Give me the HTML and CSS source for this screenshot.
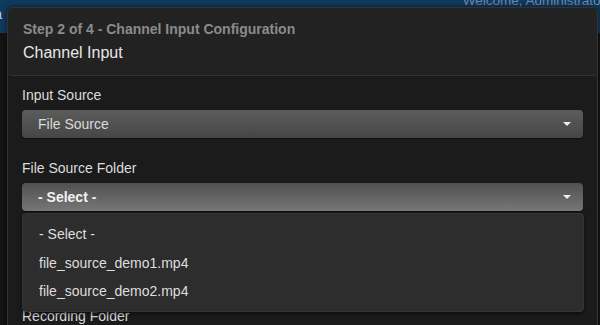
FILE: index.html
```html
<!DOCTYPE html>
<html>
<head>
<meta charset="utf-8">
<link rel="stylesheet" href="styles.css">
</head>
<body>
<div class="page">
  <header class="topbar">
    <span class="brand">Media</span>
    <span class="welcome">Welcome, Administrator</span>
  </header>
  <main class="page-body"></main>
</div>

<div class="modal">
  <div class="modal-header">
    <div class="step">Step 2 of 4 - Channel Input Configuration</div>
    <div class="title">Channel Input</div>
  </div>
  <div class="modal-body">
    <div class="form-group">
      <label class="label">Input Source</label>
      <div class="select">
        <span class="select-text">File Source</span>
        <span class="caret"></span>
      </div>
    </div>
    <div class="form-group open">
      <label class="label">File Source Folder</label>
      <div class="select active">
        <span class="select-text strong">- Select -</span>
        <span class="caret"></span>
      </div>
      <ul class="menu">
        <li class="menu-item">- Select -</li>
        <li class="menu-item">file_source_demo1.mp4</li>
        <li class="menu-item">file_source_demo2.mp4</li>
      </ul>
    </div>
    <div class="form-group hidden-group">
      <label class="label">Recording Folder</label>
      <div class="select">
        <span class="select-text">- Select -</span>
        <span class="caret"></span>
      </div>
    </div>
  </div>
</div>
</body>
</html>
```

FILE: styles.css
```css
* { box-sizing: border-box; }
html, body {
  margin: 0;
  padding: 0;
  width: 600px;
  height: 325px;
  overflow: hidden;
  background: #121212;
  font-family: "Liberation Sans", Arial, sans-serif;
}
.page { display: flex; flex-direction: column; height: 100%; }
.topbar {
  height: 33px;
  background: #0f3b60;
  display: flex;
  justify-content: space-between;
  align-items: flex-start;
  overflow: hidden;
}
.brand {
  color: #c9d4de;
  font-size: 14px;
  line-height: 20px;
  margin-left: -36px;
  margin-top: 4px;
}
.welcome {
  color: #6f8dab;
  font-size: 13.5px;
  line-height: 20px;
  margin-top: -9px;
  margin-right: -5px;
  white-space: nowrap;
}
.page-body { flex: 1; background: #141414; }

.modal {
  position: absolute;
  left: 7px;
  top: 7px;
  right: 2px;
  bottom: -60px;
  background: #1b1b1b;
  border: 1px solid #333;
  border-radius: 6px;
  box-shadow: 0 0 6px rgba(0,0,0,0.6);
}
.modal-header {
  background: #222;
  border-bottom: 1px solid #333;
  border-radius: 5px 5px 4px 4px;
  padding: 12px 15px 12px;
}
.step {
  color: #8b8b8b;
  font-size: 14px;
  font-weight: bold;
  line-height: 18px;
}
.title {
  color: #e8e8e8;
  font-size: 16px;
  line-height: 20px;
  margin-top: 5px;
}
.modal-body {
  padding: 9px 14px 0;
}
.form-group {
  display: flex;
  flex-direction: column;
  margin-bottom: 20px;
  position: relative;
}
.form-group.open { margin-bottom: 95px; }
.label {
  color: #dcdcdc;
  font-size: 14px;
  line-height: 20px;
  margin-bottom: 5px;
}
.select {
  height: 28px;
  border-radius: 4px;
  background: linear-gradient(#5c5c5c, #464646);
  box-shadow: 0 1px 1px rgba(0,0,0,0.5);
  display: flex;
  align-items: center;
  justify-content: space-between;
  padding: 0 12px 0 16px;
}
.select.active {
  background: linear-gradient(#505050, #777);
}
.select-text {
  color: #dadada;
  font-size: 14px;
}
.select-text.strong {
  color: #f2f2f2;
  font-weight: bold;
}
.caret {
  width: 0;
  height: 0;
  border-left: 4px solid transparent;
  border-right: 4px solid transparent;
  border-top: 4px solid #eee;
}
.menu {
  position: absolute;
  left: 0;
  right: -1px;
  top: 55px;
  margin: 0;
  padding: 6px 0 5px;
  list-style: none;
  background: #2d2d2d;
  border: 1px solid #353535;
  border-radius: 4px;
  box-shadow: 0 2px 4px rgba(0,0,0,0.5);
  z-index: 2;
}
.menu-item {
  color: #dedede;
  font-size: 14px;
  line-height: 28.5px;
  padding-left: 16px;
}
```
